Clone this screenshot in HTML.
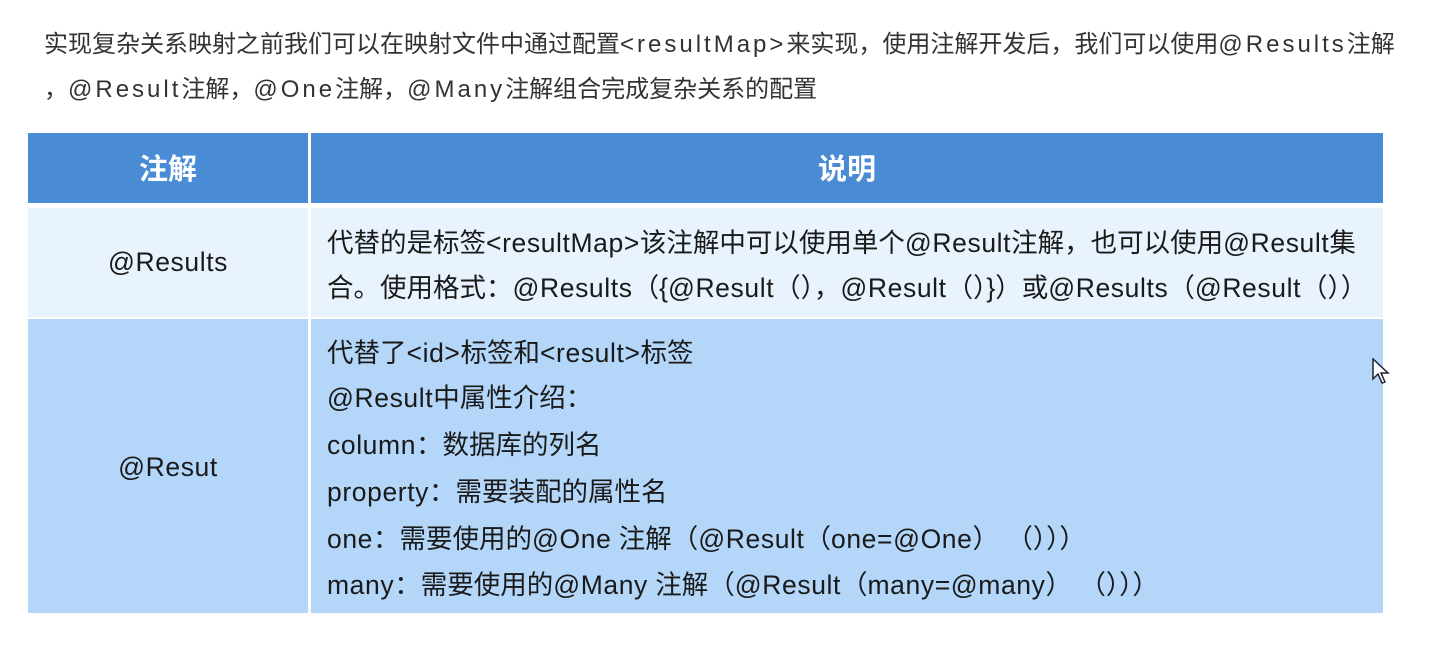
<!DOCTYPE html>
<html><head><meta charset="utf-8"><style>
body{margin:0;width:1438px;height:646px;background:#fff;position:relative;overflow:hidden;font-family:"Liberation Sans","Noto Sans CJK SC",sans-serif;color:#222}
.p{position:absolute;left:44px;font-size:24px;line-height:30px;color:#333;white-space:nowrap}
.p i{letter-spacing:3px}
.c{position:absolute;box-sizing:border-box}
.t{position:absolute;font-size:26.5px;line-height:32px;white-space:nowrap;color:#1a1a1a}
i{font-style:normal;letter-spacing:0.6px}
</style></head><body>
<div class="p" style="top:30px">实现复杂关系映射之前我们可以在映射文件中通过配置<i>&lt;resultMap&gt;</i>来实现，使用注解开发后，我们可以使用<i>@Results</i>注解</div>
<div class="p" style="top:75px">，<i>@Result</i>注解，<i>@One</i>注解，<i>@Many</i>注解组合完成复杂关系的配置</div>

<div class="c" style="left:28px;top:133px;width:280px;height:70px;background:#4a8bd6"></div>
<div class="c" style="left:311px;top:133px;width:1072px;height:70px;background:#4a8bd6"></div>
<div class="t" style="left:28px;width:280px;text-align:center;top:154px;color:#fff;font-weight:bold;font-size:29px">注解</div>
<div class="t" style="left:311px;width:1072px;text-align:center;top:154px;color:#fff;font-weight:bold;font-size:29px">说明</div>

<div class="c" style="left:28px;top:208px;width:280px;height:109px;background:#e8f3fd"></div>
<div class="c" style="left:311px;top:208px;width:1072px;height:109px;background:#e8f3fd"></div>
<div class="t" style="left:28px;width:280px;text-align:center;top:246px"><i>@Results</i></div>
<div class="t" style="left:327px;top:227px">代替的是标签<i>&lt;resultMap&gt;</i>该注解中可以使用单个<i>@Result</i>注解，也可以使用<i>@Result</i>集</div>
<div class="t" style="left:327px;top:272px">合。使用格式：<i>@Results</i>（{<i>@Result</i>（），<i>@Result</i>（）}）或<i>@Results</i>（<i>@Result</i>（））</div>

<div class="c" style="left:28px;top:319px;width:280px;height:294px;background:#b3d6f9"></div>
<div class="c" style="left:311px;top:319px;width:1072px;height:294px;background:#b3d6f9"></div>
<div class="t" style="left:28px;width:280px;text-align:center;top:451px"><i>@Resut</i></div>
<div class="t" style="left:327px;top:337px">代替了<i>&lt;id&gt;</i>标签和<i>&lt;result&gt;</i>标签</div>
<div class="t" style="left:327px;top:382px"><i>@Result</i>中属性介绍：</div>
<div class="t" style="left:327px;top:429px"><i>column</i>：数据库的列名</div>
<div class="t" style="left:327px;top:476px"><i>property</i>：需要装配的属性名</div>
<div class="t" style="left:327px;top:523px"><i>one</i>：需要使用的<i>@One</i> 注解（<i>@Result</i>（<i>one=@One</i>） （）））</div>
<div class="t" style="left:327px;top:569px"><i>many</i>：需要使用的<i>@Many</i> 注解（<i>@Result</i>（<i>many=@many</i>） （）））</div>

<svg style="position:absolute;left:1372px;top:358px" width="20" height="28" viewBox="0 0 20 28"><path d="M1 1 L1 21 L6 16 L10 25 L13 24 L9 15 L16 15 Z" fill="#fff" stroke="#223" stroke-width="1.5"/></svg>
</body></html>
